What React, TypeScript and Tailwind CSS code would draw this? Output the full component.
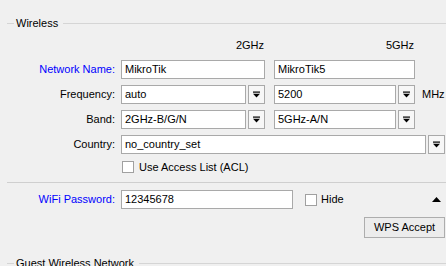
function DropArrow() {
  return (
    <svg width="7" height="7" viewBox="0 0 7 7" className="block">
      <rect x="0" y="0.5" width="7" height="1.2" fill="#000" />
      <polygon points="0,2.8 7,2.8 3.5,6.5" fill="#000" />
    </svg>
  );
}

function Input({ value, w }: { value: string; w: string }) {
  return (
    <div className={`${w} flex h-[19px] items-center border border-[#a9a9a9] bg-white pl-[3px] text-black`}>
      {value}
    </div>
  );
}

function DropBtn() {
  return (
    <div className="flex h-[19px] w-[17px] items-center justify-center border border-[#a9a9a9] bg-[#f7f7f7]">
      <DropArrow />
    </div>
  );
}

function Label({ text, blue }: { text: string; blue?: boolean }) {
  return (
    <div className={`w-[116px] shrink-0 pr-[1px] text-right ${blue ? "text-[#0000ff]" : "text-black"}`}>
      {text}
    </div>
  );
}

function Legend({ text }: { text: string }) {
  return (
    <div className="flex h-[13px] items-center pl-[7px]">
      <div className="h-px w-[7px] bg-[#d5d5d5]" />
      <span className="pl-[2px] pr-[5px] leading-[13px] text-black">{text}</span>
      <div className="h-px flex-1 bg-[#d5d5d5]" />
    </div>
  );
}

export default function App() {
  return (
    <div
      className="flex h-[266px] w-[446px] flex-col overflow-hidden bg-[#f0f0f0] pt-[17px] text-[11px] leading-[13px]"
      style={{ fontFamily: '"Liberation Sans", Arial, sans-serif' }}
    >
      <Legend text="Wireless" />

      <div className="mt-[9px] flex h-[13px] items-center">
        <div className="w-[264px] text-right">2GHz</div>
        <div className="w-[150px] text-right">5GHz</div>
      </div>

      <div className="mt-[8px] flex flex-col gap-[6px]">
        <div className="flex items-center">
          <Label text="Network Name:" blue />
          <div className="ml-[5px] flex gap-[9px]">
            <Input value="MikroTik" w="w-[144px]" />
            <Input value="MikroTik5" w="w-[141px]" />
          </div>
        </div>
        <div className="flex items-center">
          <Label text="Frequency:" />
          <div className="ml-[5px] flex items-center">
            <Input value="auto" w="w-[125px]" />
            <div className="ml-[2px]"><DropBtn /></div>
            <div className="ml-[9px]"><Input value="5200" w="w-[122px]" /></div>
            <div className="ml-[2px]"><DropBtn /></div>
            <span className="ml-[7px]">MHz</span>
          </div>
        </div>
        <div className="flex items-center">
          <Label text="Band:" />
          <div className="ml-[5px] flex items-center">
            <Input value="2GHz-B/G/N" w="w-[125px]" />
            <div className="ml-[2px]"><DropBtn /></div>
            <div className="ml-[9px]"><Input value="5GHz-A/N" w="w-[122px]" /></div>
            <div className="ml-[2px]"><DropBtn /></div>
          </div>
        </div>
        <div className="flex items-center">
          <Label text="Country:" />
          <div className="ml-[5px] flex items-center">
            <Input value="no_country_set" w="w-[305px]" />
            <div className="ml-[2px]"><DropBtn /></div>
          </div>
        </div>
      </div>

      <div className="mt-[7px] flex h-[12px] items-center pl-[122px]">
        <div className="h-[12px] w-[12px] border border-[#a0a0a0] bg-white" />
        <span className="ml-[5px]">Use Access List (ACL)</span>
      </div>

      <div className="ml-[7px] mt-[9px] h-px shrink-0 bg-[#cfcfcf]" />

      <div className="mt-[7px] flex items-center">
        <Label text="WiFi Password:" blue />
        <div className="ml-[5px]"><Input value="12345678" w="w-[172px]" /></div>
        <div className="ml-[12px] h-[12px] w-[12px] border border-[#a0a0a0] bg-white" />
        <span className="ml-[4px]">Hide</span>
        <div className="ml-auto mr-[5px]">
          <svg width="9" height="5" viewBox="0 0 9 5" className="block">
            <polygon points="0,5 9,5 4.5,0" fill="#000" />
          </svg>
        </div>
      </div>

      <div className="mt-[8px] flex justify-end pr-px">
        <div className="flex h-[21px] w-[81px] items-center justify-center border border-[#adadad] bg-[#ececec]">
          WPS Accept
        </div>
      </div>

      <div className="mt-[19px] shrink-0">
        <Legend text="Guest Wireless Network" />
      </div>
    </div>
  );
}
